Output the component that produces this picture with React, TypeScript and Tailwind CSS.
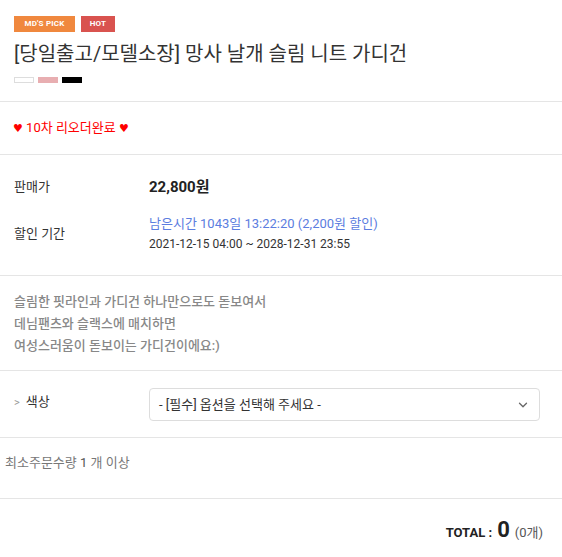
import { ChevronDown } from 'lucide-react';

const font = { fontFamily: 'Roboto, "Noto Sans CJK KR", sans-serif' };

function Heart() {
  return <span className="text-[11px]" style={{ fontFamily: '"DejaVu Sans", sans-serif' }}>♥</span>;
}

export default function App() {
  return (
    <div className="w-[562px] bg-white text-[#333]" style={font}>
      <section className="px-[14px] pt-[16px] pb-[18px] border-b border-[#e5e5e5]">
        <div className="flex gap-[6px]">
          <span className="h-[16px] w-[61px] bg-[#f0883e] text-white text-[8px] font-bold flex items-center justify-center tracking-wide">MD'S PICK</span>
          <span className="h-[16px] w-[34px] bg-[#d9534f] text-white text-[8px] font-bold flex items-center justify-center tracking-wide">HOT</span>
        </div>
        <h1 className="mt-[7px] text-[20px] leading-[30px] text-[#333]">[당일출고/모델소장] 망사 날개 슬림 니트 가디건</h1>
        <div className="mt-[8px] flex gap-[4px]">
          <span className="h-[6px] w-[20px] border border-[#ddd] bg-white" />
          <span className="h-[6px] w-[20px] bg-[#e8aeb1]" />
          <span className="h-[6px] w-[20px] bg-black" />
        </div>
      </section>
      <section className="px-[13px] h-[53px] flex items-center border-b border-[#e5e5e5]">
        <p className="text-[13px] text-[#ff0000]">
          <Heart /> 10차 리오더완료 <Heart />
        </p>
      </section>
      <section className="px-[14px] pt-[21px] pb-[21px] border-b border-[#e5e5e5]">
        <div className="flex items-center h-[22px]">
          <span className="w-[135px] text-[13px] text-[#333]">판매가</span>
          <span className="text-[15px] font-bold text-[#222]">22,800원</span>
        </div>
        <div className="flex items-center mt-[16px]">
          <span className="w-[135px] text-[13px] text-[#333]">할인 기간</span>
          <div>
            <p className="text-[13px] leading-[20px] text-[#5b7de0]">남은시간 1043일 13:22:20 (2,200원 할인)</p>
            <p className="text-[12px] leading-[20px] text-[#333]">2021-12-15 04:00 ~ 2028-12-31 23:55</p>
          </div>
        </div>
      </section>
      <section className="px-[14px] pt-[15px] pb-[13px] border-b border-[#e5e5e5]">
        <p className="text-[13px] leading-[22px] font-medium text-[#888]">
          슬림한 핏라인과 가디건 하나만으로도 돋보여서
          <br />
          데님팬츠와 슬랙스에 매치하면
          <br />
          여성스러움이 돋보이는 가디건이에요:)
        </p>
      </section>
      <section className="pl-[14px] pt-[17px] pb-[16px] border-b border-[#e5e5e5] flex items-start">
        <span className="w-[135px] shrink-0 text-[13px] text-[#333] pt-[4px]">
          <span className="text-[#999] mr-[6px] text-[11px]">&gt;</span>색상
        </span>
        <div className="w-[391px] shrink-0 h-[33px] rounded-[4px] border border-[#ddd] flex items-center justify-between pl-[9px] pr-[9px]">
          <span className="text-[13px] text-[#333]">- [필수] 옵션을 선택해 주세요 -</span>
          <ChevronDown size={14} strokeWidth={2.25} className="text-[#666]" />
        </div>
      </section>
      <section className="px-[5px] pt-[15px] h-[61px] border-b border-[#e5e5e5]">
        <p className="text-[13px] text-[#777]">
          최소주문수량 <span className="text-[#555]">1</span> 개 이상
        </p>
      </section>
      <section className="pt-[20px] pr-[19px] flex justify-end items-baseline">
        <span className="text-[13px] font-bold text-[#222]">TOTAL : </span>
        <span className="text-[22px] font-bold text-[#222] ml-[5px] leading-none">0</span>
        <span className="text-[13px] text-[#555] ml-[5px]">(0개)</span>
      </section>
    </div>
  );
}
